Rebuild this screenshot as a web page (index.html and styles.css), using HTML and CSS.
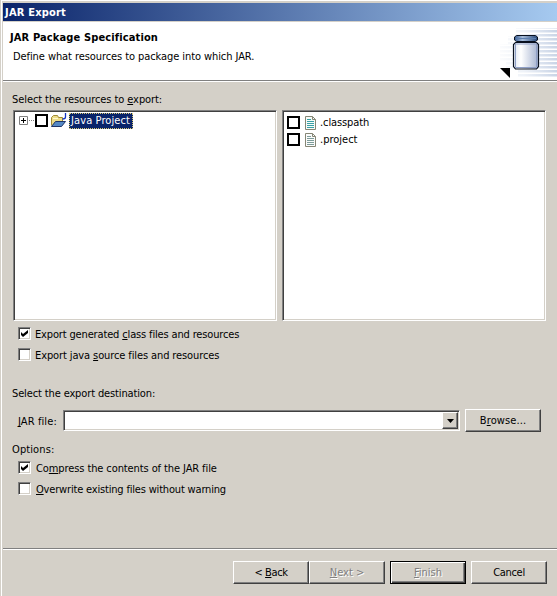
FILE: index.html
```html
<!DOCTYPE html>
<html lang="en">
<head>
<meta charset="utf-8">
<title>JAR Export</title>
<link rel="stylesheet" href="styles.css">
</head>
<body>
<div class="dialog">
  <div class="titlebar"><span class="t-title">JAR Export</span></div>
  <header class="banner">
    <div class="banner-text">
      <h1><span class="t-head">JAR Package Specification</span></h1>
      <p><span class="t-desc">Define what resources to package into which JAR.</span></p>
    </div>
    <svg class="jar" width="65" height="58" viewBox="0 0 65 58">
      <defs>
        <linearGradient id="fade" x1="0" x2="1"><stop offset="0" stop-color="#fff"/><stop offset=".5" stop-color="#eef2f8"/><stop offset="1" stop-color="#c9d4e6"/></linearGradient>
        <linearGradient id="glass" x1="0" x2="1"><stop offset="0" stop-color="#dfe6f1"/><stop offset=".3" stop-color="#fff"/><stop offset="1" stop-color="#a3b1cf"/></linearGradient>
        <linearGradient id="lid" x1="0" x2="1"><stop offset="0" stop-color="#34598e"/><stop offset=".35" stop-color="#a7bddb"/><stop offset="1" stop-color="#264779"/></linearGradient>
        <pattern id="lines" width="65" height="4" patternUnits="userSpaceOnUse"><rect width="65" height="2.5" fill="url(#fade)"/></pattern>
      </defs>
      <path d="M8 22h8v-8h8V6h41v50H26v-8H14v-8H8z" fill="url(#lines)"/>
      <path d="M24.500 13.500h19l2 1.500v3l-2 1.500h-19l-2-1.500v-3z" fill="url(#lid)" stroke="#08101f"/>
      <path d="M24 16.500h20" stroke="#5c7fb0"/>
      <path d="M23.500 20.500h21l2 2v22l-2 2.500h-21l-2-2.500v-22z" fill="url(#glass)" stroke="#08101f" stroke-width="1.200"/>
      <path d="M23.500 22h21v23.500h-21z" fill="none" stroke="#8f9fc6"/>
      <path d="M8 46h10v10z" fill="#000"/>
    </svg>
  </header>
  <main class="content">
    <div class="label"><span class="t-res">Select the resources to <u>e</u>xport:</span></div>
    <div class="panes">
      <div class="pane tree">
        <div class="row">
          <svg class="expander" width="16" height="9" viewBox="0 0 16 9"><path d="M.5.5h8v8h-8z" fill="#fff" stroke="#808080"/><path d="M2 4.500h5M4.500 2v5" stroke="#000"/><path d="M10 4.500h5" stroke="#808080" stroke-dasharray="1 1"/></svg>
          <span class="box"></span>
          <svg class="folder" width="17" height="16" viewBox="0 0 17 16"><path d="M1.500 12.500v-8l2-2h4l1 2h4v4" fill="#ecdc88" stroke="#a18a35"/><path d="M1.500 13.500l4-5h10l-4 5z" fill="#5589c5" stroke="#1d3468"/><path d="M3 5.500h5" stroke="#fff8d0"/><path d="M15.500 0v4q0 2-3 2" fill="none" stroke="#1534c4" stroke-width="1.300"/></svg>
          <span class="selected"><span class="t-java">Java Project</span></span>
        </div>
      </div>
      <div class="pane files">
        <div class="row"><span class="box"></span><svg class="file" width="11" height="14" viewBox="0 0 11 14"><path d="M.5.5h7l3 3v10H.5z" fill="#f7fbf8" stroke="#858675"/><path d="M7.500.5v3h3" fill="none" stroke="#858675"/><path d="M2 3.500h4M2 5.500h7M2 7.500h7M2 9.500h7M2 11.500h7" stroke="#38a0a5"/></svg><span class="t-class">.classpath</span></div>
        <div class="row"><span class="box"></span><svg class="file" width="11" height="14" viewBox="0 0 11 14"><path d="M.5.5h7l3 3v10H.5z" fill="#fbfbfb" stroke="#858675"/><path d="M7.500.5v3h3" fill="none" stroke="#858675"/><path d="M2 3.500h4M2 5.500h7M2 7.500h7M2 9.500h7M2 11.500h7" stroke="#7c9c99"/></svg><span class="t-proj">.project</span></div>
      </div>
    </div>
    <div class="check first"><span class="cb"><svg width="7" height="7" viewBox="0 0 7 7"><path d="M0 2l2 2 5-4v3L2 7 0 5z"/></svg></span><span class="t-gen">Export generated <u>c</u>lass files and resources</span></div>
    <div class="check"><span class="cb"></span><span class="t-src">Export java <u>s</u>ource files and resources</span></div>
    <div class="label dest"><span class="t-dest">Select the export destination:</span></div>
    <div class="filerow">
      <span class="filelabel"><span class="t-jar"><u>J</u>AR file:</span></span>
      <div class="combo"><span class="drop"><svg width="7" height="4" viewBox="0 0 7 4"><path d="M0 0h7L3.500 4z"/></svg></span></div>
      <div class="btn browse"><span class="t-browse">B<u>r</u>owse...</span></div>
    </div>
    <div class="label options"><span class="t-opt">Options:</span></div>
    <div class="check opt"><span class="cb"><svg width="7" height="7" viewBox="0 0 7 7"><path d="M0 2l2 2 5-4v3L2 7 0 5z"/></svg></span><span class="t-comp">Co<u>m</u>press the contents of the JAR file</span></div>
    <div class="check"><span class="cb"></span><span class="t-over"><u>O</u>verwrite existing files without warning</span></div>
  </main>
  <footer class="footer">
    <div class="btn"><span class="t-back">&lt; <u>B</u>ack</span></div>
    <div class="btn disabled"><span class="t-next"><u>N</u>ext &gt;</span></div>
    <div class="btn disabled default"><span class="t-fin"><u>F</u>inish</span></div>
    <div class="btn cancel"><span class="t-can">Cancel</span></div>
  </footer>
</div>
</body>
</html>
```
FILE: styles.css
```css
* { box-sizing: border-box; }
body {
  margin: 0;
  overflow: hidden;
  background: #d4d0c8;
  color: #000;
  font: 11px/14px "DejaVu Sans Condensed", "DejaVu Sans", sans-serif;
  font-stretch: condensed;
  white-space: nowrap;
}
svg { display: block; flex: none; }
u { text-decoration: underline; text-underline-offset: 1px; text-decoration-thickness: 1px; text-decoration-skip-ink: none; }
.dialog {
  display: flex;
  flex-direction: column;
  width: 557px;
  height: 596px;
  padding: 2px 0 0 2px;
  border-left: 1px solid #d4d0c8;
  box-shadow: inset 1px 0 #fff, inset 0 1px #fff;
}
.titlebar {
  height: 19px;
  padding: 3px 2px;
  margin-top: 1px;
  background: linear-gradient(90deg, #0a246a, #a6caf0);
  border-bottom: 1px solid #d4d0c8;
  color: #fff;
  font-weight: bold;
}
.banner {
  display: flex;
  flex: none;
  justify-content: space-between;
  height: 59px;
  background: #fff;
  border-bottom: 1px solid #808080;
  box-shadow: 0 1px #fff;
}
.banner-text { padding: 9px 0 0 7px; }
.banner h1 { margin: 0; font-size: 11px; line-height: 14px; }
.banner p { margin: 5px 0 0 3px; }
.content { display: flex; flex-direction: column; flex: 1; padding: 12px 10px 0 9px; }
.label { height: 14px; }
.panes { display: grid; grid-template-columns: 264px 264px; gap: 5px; margin: 3px 0 0 1px; }
.pane {
  height: 211px;
  background: #fff;
  border: 1px solid;
  border-color: #808080 #fff #fff #808080;
  box-shadow: inset 1px 1px #404040, inset -1px -1px #d4d0c8;
}
.row { display: flex; align-items: center; height: 17px; }
.tree { padding: 1px 0 0 5px; }
.files { padding: 3px 0 0 4px; }
.box { flex: none; width: 13px; height: 13px; border: 2px solid #000; background: #fff; }
.folder { margin-left: 2px; }
.selected { height: 16px; width: 64px; padding: 1px 2px; margin-left: 2px; color: #fff; background: #0a246a; outline: 1px dotted #d8c774; outline-offset: -1px; }
.file { margin: 0 4px 0 5px; }
.check { display: flex; align-items: center; gap: 4px; height: 21px; padding-left: 6px; }
.check > span:last-child { padding-top: 2px; }
.first { margin-top: 2px; }
.cb { display: flex; flex: none; align-items: center; justify-content: center; width: 13px; height: 13px; background: #fff; border: 1px solid; border-color: #808080 #fff #fff #808080; box-shadow: inset 1px 1px #404040, inset -1px -1px #d4d0c8; }
.check > .cb { padding: 0; }
.dest { margin-top: 22px; }
.filerow { display: flex; align-items: center; height: 23px; margin-top: 8px; }
.filelabel { width: 51px; padding: 2px 0 0 6px; }
.combo { display: flex; justify-content: flex-end; width: 397px; height: 21px; padding: 1px; background: #fff; border: 1px solid; border-color: #808080 #fff #fff #808080; box-shadow: inset 1px 1px #404040, inset -1px -1px #d4d0c8; }
.drop, .btn { display: flex; align-items: center; justify-content: center; background: #d4d0c8; border: 1px solid; border-color: #fff #404040 #404040 #fff; box-shadow: inset -1px -1px #808080; }
.drop { width: 16px; }
.btn { width: 76px; height: 23px; }
.browse { margin-left: 5px; }
.options { margin-top: 11px; }
.footer { display: flex; flex: none; height: 48px; padding: 12px 0 0 230px; border-top: 1px solid #808080; box-shadow: inset 0 1px #fff; }
.disabled { color: #808080; text-shadow: 1px 1px #fff; }
.default { margin-left: 5px; border-color: #000; box-shadow: inset 1px 1px #fff, inset -1px -1px #404040, inset -2px -2px #808080; }
.cancel { margin-left: 5px; }

.t-title { letter-spacing: .2px; }
.t-head { letter-spacing: .13px; }
.t-desc { letter-spacing: -.08px; }
.t-res { letter-spacing: -.08px; }
.t-java { letter-spacing: .1px; }
.t-class { letter-spacing: -.1px; }
.t-gen { letter-spacing: -.15px; }
.t-src { letter-spacing: -.11px; }
.t-dest { letter-spacing: -.13px; }
.t-jar { letter-spacing: .1px; }
.t-comp { padding-left: 1px; letter-spacing: -.1px; }
.t-over { padding-left: 1px; letter-spacing: -.18px; }
.t-opt { letter-spacing: .1px; }
.t-back { letter-spacing: -.4px; }
.t-can { letter-spacing: -.3px; }
.t-browse { letter-spacing: .1px; }
```
